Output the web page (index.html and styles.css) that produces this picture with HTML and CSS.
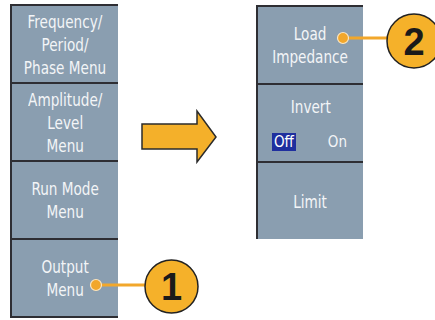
FILE: index.html
```html
<!DOCTYPE html>
<html>
<head>
    <title>Output Menu</title>
    <link rel="stylesheet" href="styles.css">
</head>
<body>
    <div class="figure">
        <div class="panel panel-left">
            <div class="btn"><span class="label">Frequency/<br>Period/<br>Phase Menu</span></div>
            <div class="btn"><span class="label">Amplitude/<br>Level<br>Menu</span></div>
            <div class="btn"><span class="label">Run Mode<br>Menu</span></div>
            <div class="btn"><span class="label">Output<br>Menu</span></div>
        </div>

        <div class="arrow-col">
            <svg class="arrow" width="80" height="58" viewBox="0 0 80 58">
                <polygon points="2,17 57,17 57,4 76,30 57,55 57,42 2,42" fill="#f4b02a" stroke="#2b2b2b" stroke-width="1.5" stroke-linejoin="miter"/>
            </svg>
        </div>

        <div class="panel panel-right">
            <div class="btn"><span class="label">Load<br>Impedance</span></div>
            <div class="btn">
                <span class="label">Invert</span>
                <div class="toggle">
                    <span class="opt opt-on">Off</span>
                    <span class="opt">On</span>
                </div>
            </div>
            <div class="btn"><span class="label">Limit</span></div>
        </div>

        <!-- callouts -->
        <svg class="callouts" width="435" height="320" viewBox="0 0 435 320">
            <line x1="96" y1="285" x2="146" y2="285" stroke="#f2a72b" stroke-width="3"/>
            <circle cx="96" cy="285" r="5.5" fill="#f2a72b" stroke="#fbe6c2" stroke-width="1.2"/>
            <circle cx="171.5" cy="286.5" r="26.5" fill="#f5b12a" stroke="#222" stroke-width="1.5"/>
            <text x="171.5" y="300" class="num">1</text>

            <line x1="343" y1="38" x2="388" y2="38" stroke="#f2a72b" stroke-width="3"/>
            <circle cx="343" cy="38" r="5.5" fill="#f2a72b" stroke="#fbe6c2" stroke-width="1.2"/>
            <circle cx="414" cy="41" r="27" fill="#f5b12a" stroke="#222" stroke-width="1.5"/>
            <text x="414" y="55" class="num">2</text>
        </svg>
    </div>
</body>
</html>
```

FILE: styles.css
```css
body {
    margin: 0;
    background-color: #fff;
    font-family: "DejaVu Sans Condensed", "DejaVu Sans", sans-serif;
    font-stretch: condensed;
}

.figure {
    position: relative;
    width: 435px;
    height: 320px;
    display: flex;
    align-items: flex-start;
}

.panel {
    background-color: #8a9eb0;
    border-left: 2px solid #2e2e33;
    border-top: 2px solid #2e2e33;
    display: flex;
    flex-direction: column;
}

.panel-left {
    margin: 4px 0 0 10px;
    width: 106px;
    border-bottom: 2px solid #2e2e33;
}

.panel-right {
    margin-top: 5px;
    width: 105px;
}

.btn {
    height: 76px;
    display: flex;
    flex-direction: column;
    align-items: center;
    justify-content: center;
    text-align: center;
    color: #f3f5f7;
    font-size: 18px;
    line-height: 23px;
    border-top: 2px solid #2e2e33;
}

.btn:first-child {
    border-top: none;
}

/* the scope font is tall and narrow */
.label {
    display: inline-block;
    white-space: nowrap;
    transform: scaleX(0.84);
}

.arrow-col {
    width: 138px;
    padding-top: 107px;
}

.arrow {
    display: block;
    margin-left: 22px;
}

.toggle {
    display: flex;
    gap: 30px;
    margin-top: 15px;
    font-size: 15px;
    line-height: 18px;
}

.opt {
    padding: 0 2px;
}

.opt-on {
    background-color: #1f2f9e;
    color: #fff;
}

.callouts {
    position: absolute;
    left: 0;
    top: 0;
}

.num {
    font-family: "Liberation Sans", Arial, sans-serif;
    font-weight: bold;
    font-size: 38px;
    text-anchor: middle;
    fill: #1a1a1a;
}
```
